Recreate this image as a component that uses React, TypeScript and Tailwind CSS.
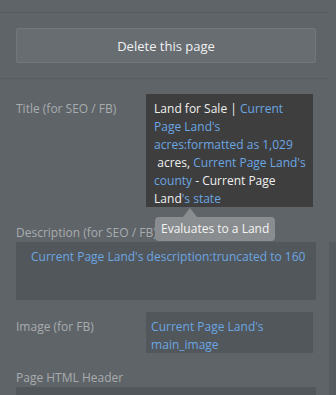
import React from 'react';

const blue = 'text-[#6ba6e2]';

export default function App() {
  return (
    <div className="w-[336px] h-[395px] overflow-hidden bg-[#5f6468] flex font-['Open_Sans',sans-serif] text-[12px] leading-[18px]">
      <div className="w-[329px] shrink-0 relative">
        <div className="h-[12px]" />
        <div className="h-px bg-[#565b5f]" />
        <div className="px-[16px] pt-[15px] pb-[15px]">
          <button className="w-[300px] h-[35px] bg-[#686d71] border border-[#73777b] rounded-[2px] text-[#f1f1f1] text-[13px]">
            Delete this page
          </button>
        </div>
        <div className="h-px bg-[#565b5f]" />

        {/* Title */}
        <div className="flex pt-[15px] px-[16px]">
          <div className="w-[131px] pt-[6px] text-[#a8acaf]">Title (for SEO / FB)</div>
          <div className="w-[168px] h-[113px] bg-[#3e3e3e] pl-[8px] pr-[4px] pt-[6px] text-[#f0f0f0]">
            Land for Sale | <span className={blue}>Current Page Land's acres:formatted as 1,029</span>
            <wbr />
            {'\u00a0'}acres, <span className={blue}>Current Page Land's county</span> - Current Page Land
            <span className={blue}>'s state</span>
          </div>
        </div>

        {/* Description */}
        <div className="px-[16px] pt-[16px]">
          <div className="text-[#a8acaf] h-[19px] leading-[19px]">Description (for SEO / FB)</div>
          <div className="w-[300px] h-[58px] bg-[#52575b] pl-[15px] pr-[4px] pt-[6px] text-[#6ba6e2]">
            Current Page Land's description:truncated to 160
          </div>
        </div>

        {/* Image */}
        <div className="flex pt-[12px] px-[16px]">
          <div className="w-[131px] pt-[6px] text-[#a8acaf]">Image (for FB)</div>
          <div className="w-[168px] h-[41px] bg-[#52575b] pl-[5px] pt-[6px] text-[#6ba6e2] overflow-visible">
            Current Page Land's main_image
          </div>
        </div>

        {/* HTML header */}
        <div className="px-[16px] pt-[15px]">
          <div className="text-[#a8acaf] h-[19px] leading-[19px]">Page HTML Header</div>
          <div className="w-[300px] h-[40px] bg-[#52575b]" />
        </div>

        {/* tooltip */}
        <div className="absolute left-[155px] top-[208px] flex flex-col items-start">
          <div className="ml-[28px] w-0 h-0 border-l-[7px] border-r-[7px] border-b-[9px] border-l-transparent border-r-transparent border-b-[#8a8d90]" />
          <div className="bg-[#8a8d90] rounded-[4px] px-[6px] h-[24px] leading-[24px] text-[#f3f3f3] whitespace-nowrap">
            Evaluates to a Land
          </div>
        </div>
      </div>
      <div className="flex-1 flex flex-col">
        <div className="h-[242px]" />
        <div className="flex-1 bg-[#565b5f]" />
      </div>
    </div>
  );
}
